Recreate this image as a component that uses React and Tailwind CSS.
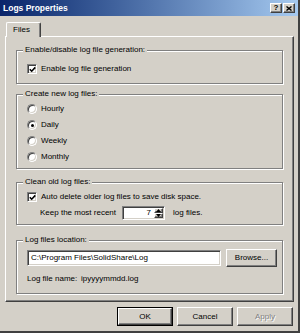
import React from 'react';

const raised =
  'border-t border-l border-t-white border-l-white border-b border-r border-b-[#404040] border-r-[#404040] shadow-[inset_-1px_-1px_0_#808080]';
const sunken =
  'border-t border-l border-t-[#808080] border-l-[#808080] border-b border-r border-b-white border-r-white shadow-[inset_1px_1px_0_#404040,inset_-1px_-1px_0_#D4D0C8]';

function Group({ label, className, children }) {
  return (
    <div
      className={`relative border border-[#808080] shadow-[inset_1px_1px_0_#fff,1px_1px_0_#fff] ${className}`}
    >
      <span className="absolute left-[6px] top-[-6px] bg-[#D4D0C8] px-[2px] leading-[10px]">{label}</span>
      {children}
    </div>
  );
}

function Checkbox() {
  return (
    <div className={`w-[10px] h-[10px] bg-white flex items-center justify-center ${sunken}`}>
      <svg width="7" height="7" viewBox="0 0 7 7">
        <path d="M0.8 3.2 L2.7 5.2 L6.3 1.4" fill="none" stroke="#000" strokeWidth="1.6" />
      </svg>
    </div>
  );
}

function Radio({ checked, label }) {
  return (
    <div className="h-[16px] flex items-center gap-[4px]">
      <div className="w-[10px] h-[10px] rounded-full bg-white border border-t-[#808080] border-l-[#808080] border-b-white border-r-white shadow-[inset_1px_1px_0_#404040,inset_-1px_-1px_0_#D4D0C8] flex items-center justify-center">
        {checked && <div className="w-[3px] h-[3px] rounded-full bg-black" />}
      </div>
      <span>{label}</span>
    </div>
  );
}

function Button({ children, isDefault, disabled, className }) {
  const inner = (
    <div className={`h-full w-full flex items-center justify-center bg-[#D4D0C8] ${raised}`}>
      <span className={disabled ? 'text-[#808080] [text-shadow:1px_1px_0_#fff]' : ''}>{children}</span>
    </div>
  );
  if (isDefault) {
    return <div className={`border border-black ${className}`}>{inner}</div>;
  }
  return <div className={className}>{inner}</div>;
}

export default function App() {
  return (
    <div className="w-[300px] h-[333px] bg-[#D4D0C8] flex flex-col text-[8px] leading-none text-black font-['Liberation_Sans',Arial,sans-serif] border-r-2 border-b-2 border-r-[#404040] border-b-[#404040] overflow-hidden">
      {/* title bar */}
      <div className="h-[16px] shrink-0 flex items-center justify-between pl-[3px] pr-[3px] bg-linear-to-r from-[#0A246A] to-[#A6CAF0]">
        <span className="text-white font-bold text-[8.5px]">Logs Properties</span>
        <div className="flex gap-[1px]">
          <div className={`w-[12px] h-[10px] bg-[#D4D0C8] flex items-center justify-center font-bold text-[8px] ${raised}`}>?</div>
          <div className={`w-[12px] h-[10px] bg-[#D4D0C8] flex items-center justify-center ${raised}`}>
            <svg width="6" height="5" viewBox="0 0 6 5">
              <path d="M0.5 0.5 L5.5 4.5 M5.5 0.5 L0.5 4.5" stroke="#000" strokeWidth="1.4" />
            </svg>
          </div>
        </div>
      </div>

      <div className="pl-[5px] pr-[4px] pt-[6px] flex flex-col">
        {/* tab */}
        <div className="relative z-10 ml-[1px] mb-[-1px] w-[35px] h-[15px] bg-[#D4D0C8] border-t border-l border-t-white border-l-white border-r border-r-[#404040] rounded-t-[2px] shadow-[inset_-1px_0_0_#808080] flex items-center pl-[6px]">
          Files
        </div>

        {/* panel */}
        <div className="h-[266px] border-t border-l border-t-white border-l-white border-b border-r border-b-[#404040] border-r-[#404040] shadow-[inset_-1px_-1px_0_#808080] pt-[13px] pl-[10px] pr-[10px] flex flex-col">
          <Group label="Enable/disable log file generation:" className="h-[34px] pt-[13px] pl-[10px]">
            <div className="flex items-center gap-[4px]">
              <Checkbox />
              <span>Enable log file generation</span>
            </div>
          </Group>

          <Group label="Create new log files:" className="mt-[10px] h-[75px] pt-[6px] pl-[10px]">
            <Radio label="Hourly" />
            <Radio label="Daily" checked />
            <Radio label="Weekly" />
            <Radio label="Monthly" />
          </Group>

          <Group label="Clean old log files:" className="mt-[13px] h-[43px] pt-[9px] pl-[10px]">
            <div className="flex items-center gap-[4px]">
              <Checkbox />
              <span>Auto delete older log files to save disk space.</span>
            </div>
            <div className="mt-[4px] flex items-center pl-[13px]">
              <span className="w-[82px]">Keep the most recent</span>
              <div className={`w-[43px] h-[14px] bg-white flex items-center ${sunken}`}>
                <span className="flex-1 text-right pr-[3px]">7</span>
                <div className="w-[10px] h-full flex flex-col py-[1px] pr-[1px]">
                  <div className={`flex-1 bg-[#D4D0C8] flex items-center justify-center ${raised}`}>
                    <svg width="5" height="3" viewBox="0 0 5 3"><path d="M0 3 L2.5 0 L5 3 Z" fill="#000" /></svg>
                  </div>
                  <div className={`flex-1 bg-[#D4D0C8] flex items-center justify-center ${raised}`}>
                    <svg width="5" height="3" viewBox="0 0 5 3"><path d="M0 0 L2.5 3 L5 0 Z" fill="#000" /></svg>
                  </div>
                </div>
              </div>
              <span className="ml-[8px]">log files.</span>
            </div>
          </Group>

          <Group label="Log files location:" className="mt-[15px] h-[54px] pt-[8px] pl-[10px] pr-[5px]">
            <div className="flex items-center">
              <div className={`w-[194px] h-[16px] bg-white flex items-center pl-[3px] ${sunken}`}>
                C:\Program Files\SolidShare\Log
              </div>
              <Button className="ml-[5px] w-[51px] h-[18px]">Browse...</Button>
            </div>
            <div className="mt-[8px] flex items-center">
              <span className="w-[54px]">Log file name:</span>
              <span>ipyyyymmdd.log</span>
            </div>
          </Group>
        </div>

        {/* buttons */}
        <div className="mt-[5px] flex justify-end gap-[4px] pr-[1px]">
          <Button isDefault className="w-[56px] h-[19px]">OK</Button>
          <Button className="w-[56px] h-[19px]">Cancel</Button>
          <Button disabled className="w-[56px] h-[19px]">Apply</Button>
        </div>
      </div>
    </div>
  );
}
